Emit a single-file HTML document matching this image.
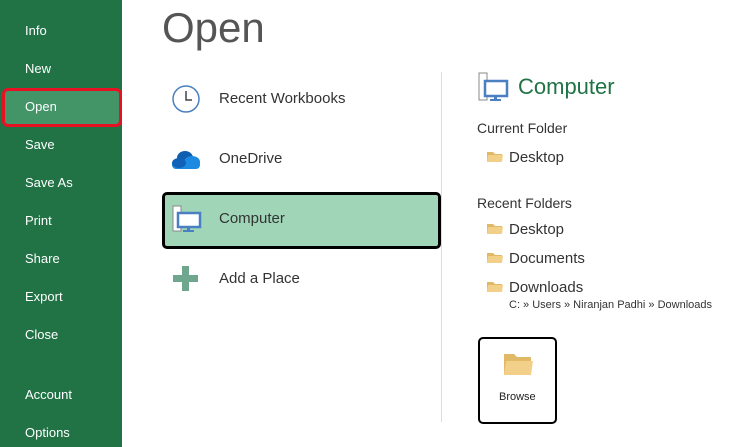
<!DOCTYPE html><html><head><style>
body{margin:0;width:731px;height:447px;overflow:hidden;background:#fff;font-family:"Liberation Sans",sans-serif;position:relative}
.sb{position:absolute;left:0;top:0;width:122px;height:447px;background:#217346}
.sb div{position:absolute;left:25px;color:#fff;font-size:13px}
.t{position:absolute;color:#333}
.f{position:absolute;width:16px;height:12px}
</style></head><body>
<div class="sb">
<div style="top:23px">Info</div>
<div style="top:61px">New</div>
<div style="left:2px;top:88px;width:114px;height:33px;border:3px solid #e81123;border-radius:6px;background:#439467"></div>
<div style="top:99px">Open</div>
<div style="top:137px">Save</div>
<div style="top:175px">Save As</div>
<div style="top:213px">Print</div>
<div style="top:251px">Share</div>
<div style="top:289px">Export</div>
<div style="top:327px">Close</div>
<div style="top:387px">Account</div>
<div style="top:425px">Options</div>
</div>
<div class="t" style="left:162px;top:4px;font-size:42px;color:#555">Open</div>
<svg style="position:absolute;left:171px;top:84px" width="30" height="30"><circle cx="15" cy="15" r="13" fill="none" stroke="#4a7fc1" stroke-width="1.5"/><path d="M15 7v9h6" fill="none" stroke="#444" stroke-width="1.5"/></svg>
<div class="t" style="left:219px;top:90px;font-size:15px">Recent Workbooks</div>
<svg style="position:absolute;left:171px;top:148px" width="30" height="22"><ellipse cx="14" cy="10" rx="8" ry="7" fill="#0f5fb0"/><ellipse cx="21" cy="14" rx="8" ry="6" fill="#1b8ae0"/><rect x="1" y="12" width="28" height="9" rx="4" fill="#1b8ae0"/><ellipse cx="8" cy="15" rx="7" ry="5" fill="#0f62b8"/></svg>
<div class="t" style="left:219px;top:150px;font-size:15px">OneDrive</div>
<div style="position:absolute;left:162px;top:192px;width:273px;height:51px;border:3px solid #000;border-radius:5px;background:#a0d5b8"></div>
<svg style="position:absolute;left:172px;top:205px" width="30" height="28"><rect x="1" y="1" width="8" height="25" fill="#fff" stroke="#888"/><rect x="6" y="8" width="22" height="14" fill="#fff" stroke="#4a7fc1" stroke-width="2.5"/><rect x="15" y="22" width="3" height="3" fill="#4a7fc1"/><rect x="11" y="25" width="11" height="2" fill="#4a7fc1"/></svg>
<div class="t" style="left:219px;top:210px;font-size:15px">Computer</div>
<svg style="position:absolute;left:172px;top:265px" width="28" height="28"><path d="M10 1h7v9h9v7h-9v9h-7v-9h-9v-7h9z" fill="#6fa78e"/></svg>
<div class="t" style="left:219px;top:270px;font-size:15px">Add a Place</div>
<div style="position:absolute;left:441px;top:72px;width:1px;height:350px;background:#ddd"></div>
<svg style="position:absolute;left:478px;top:72px" width="32" height="30"><rect x="1" y="1" width="8" height="27" fill="#fff" stroke="#888"/><rect x="7" y="9" width="22" height="15" fill="#fff" stroke="#4a7fc1" stroke-width="2.5"/><rect x="16" y="24" width="3" height="3" fill="#4a7fc1"/><rect x="12" y="27" width="11" height="2" fill="#4a7fc1"/></svg>
<div class="t" style="left:518px;top:74px;font-size:22px;color:#217346">Computer</div>
<div class="t" style="left:477px;top:120px;font-size:14px">Current Folder</div>
<svg class="f" style="left:487px;top:150px"><path d="M0 2h6l2 2h7v8H0z" fill="#e0b866"/><path d="M1 5h15l-1 7H0z" fill="#f3d08a"/></svg>
<div class="t" style="left:509px;top:149px;font-size:15px">Desktop</div>
<div class="t" style="left:477px;top:195px;font-size:14px">Recent Folders</div>
<svg class="f" style="left:487px;top:222px"><path d="M0 2h6l2 2h7v8H0z" fill="#e0b866"/><path d="M1 5h15l-1 7H0z" fill="#f3d08a"/></svg>
<div class="t" style="left:509px;top:221px;font-size:15px">Desktop</div>
<svg class="f" style="left:487px;top:251px"><path d="M0 2h6l2 2h7v8H0z" fill="#e0b866"/><path d="M1 5h15l-1 7H0z" fill="#f3d08a"/></svg>
<div class="t" style="left:509px;top:250px;font-size:15px">Documents</div>
<svg class="f" style="left:487px;top:280px"><path d="M0 2h6l2 2h7v8H0z" fill="#e0b866"/><path d="M1 5h15l-1 7H0z" fill="#f3d08a"/></svg>
<div class="t" style="left:509px;top:279px;font-size:15px">Downloads</div>
<div class="t" style="left:509px;top:299px;font-size:11px">C: » Users » Niranjan Padhi » Downloads</div>
<div style="position:absolute;left:478px;top:337px;width:75px;height:83px;border:2px solid #000;border-radius:5px;background:#fff"></div>
<svg style="position:absolute;left:503px;top:352px" width="30" height="24"><path d="M1 2h10l3 3h14v18H1z" fill="#e0b866"/><path d="M3 9h27l-2 14H1z" fill="#f3d08a"/></svg>
<div class="t" style="left:499px;top:391px;font-size:11px;color:#222">Browse</div>
</body></html>
